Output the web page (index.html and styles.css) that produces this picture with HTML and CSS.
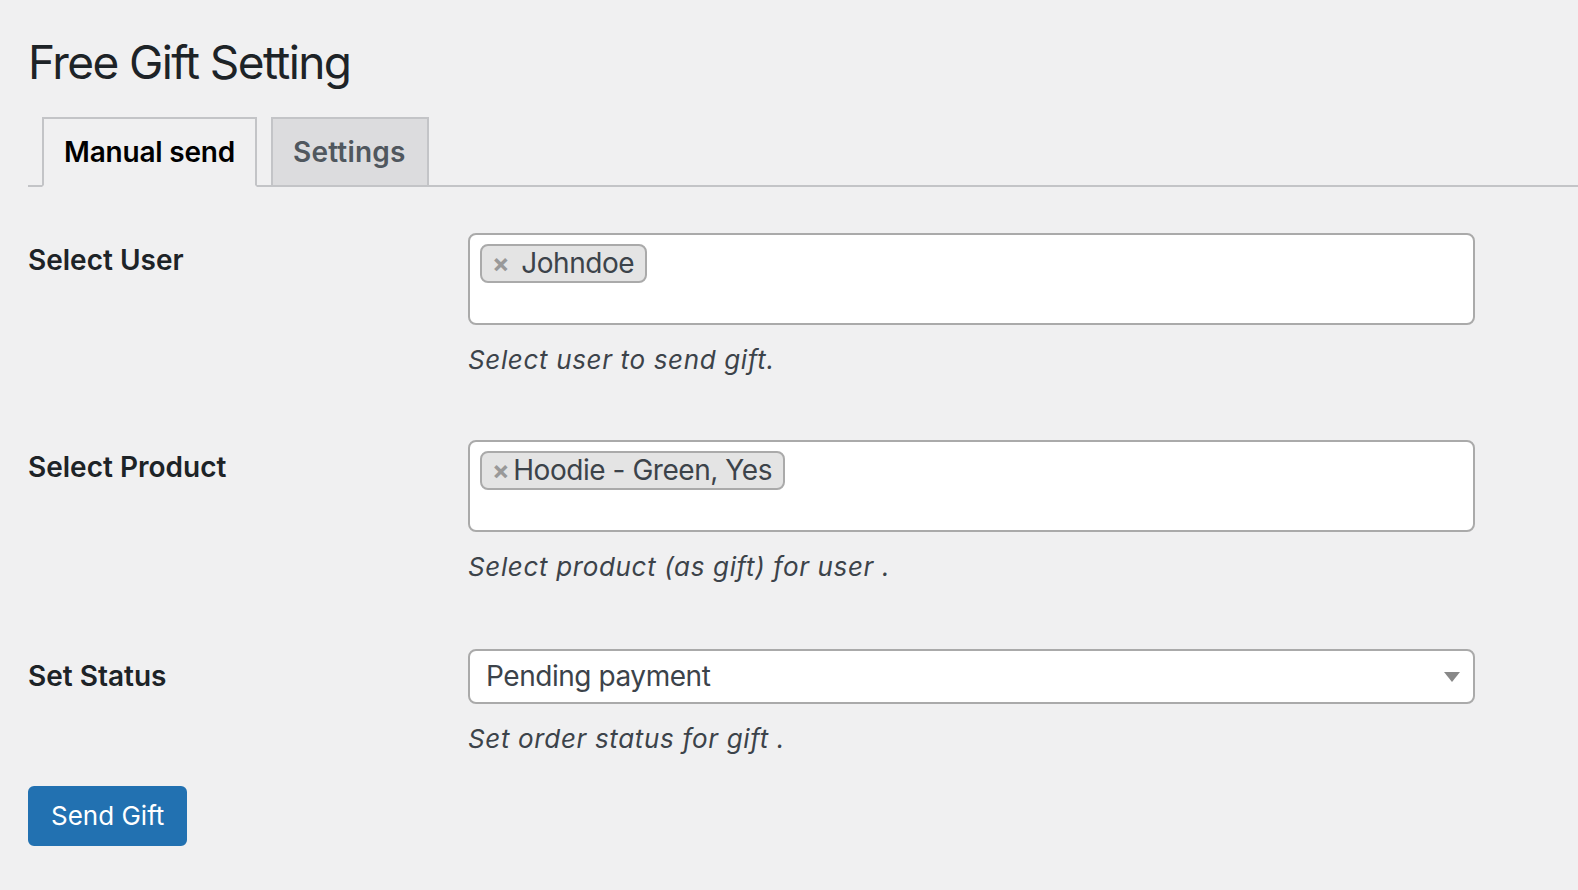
FILE: index.html
```html
<!doctype html>
<html>
    <head>
        <link rel="stylesheet" href="styles.css">
    </head>
    <body>
        <div class="wrap">
            <h1>Free Gift Setting</h1>
            <nav class="tabs">
                <a class="tab tab-active">Manual send</a>
                <a class="tab">Settings</a>
            </nav>
            <form class="gift-form">
                <div class="row">
                    <label class="row-label">Select User</label>
                    <div class="row-field">
                        <div class="multi">
                            <span class="chip"><span class="chip-x chip-x-wide">×</span>Johndoe</span>
                        </div>
                        <p class="description">Select user to send gift.</p>
                    </div>
                </div>
                <div class="row row-product">
                    <label class="row-label">Select Product</label>
                    <div class="row-field">
                        <div class="multi">
                            <span class="chip"><span class="chip-x">×</span>Hoodie - Green, Yes</span>
                        </div>
                        <p class="description">Select product (as gift) for user .</p>
                    </div>
                </div>
                <div class="row row-last">
                    <label class="row-label">Set Status</label>
                    <div class="row-field">
                        <div class="single">
                            <span>Pending payment</span>
                            <span class="arrow"></span>
                        </div>
                        <p class="description description-status">Set order status for gift .</p>
                    </div>
                </div>
                <button type="button" class="button-primary">Send Gift</button>
            </form>
        </div>
    </body>
</html>
```

FILE: styles.css
```css
* {
    margin: 0;
    padding: 0;
    box-sizing: border-box;
}
body {
    background: #f0f0f1;
    color: #1d2327;
    font-family: Inter, "Noto Sans", sans-serif;
}
.wrap {
    padding-left: 28px;
}
h1 {
    font-size: 46px;
    font-weight: 400;
    line-height: 60px;
    margin-top: 32px;
    letter-spacing: -1.6px;
}
.tabs {
    display: flex;
    margin-top: 25px;
    border-bottom: 2px solid #c3c4c7;
}
.tab {
    margin-left: 14px;
    margin-bottom: -2px;
    padding: 10px 21px 10px 20px;
    border: 2px solid #c3c4c7;
    background: #dcdcde;
    color: #50575e;
    font-size: 28px;
    font-weight: 600;
    line-height: 46px;
    letter-spacing: 0.2px;
}
.tab-active {
    padding-right: 20px;
    background: #f0f0f1;
    border-bottom-color: #f0f0f1;
    color: #000;
    letter-spacing: -0.2px;
}
.gift-form {
    padding-top: 14px;
}
.row {
    display: flex;
    padding-bottom: 29px;
}
.row-product {
    padding-bottom: 31px;
}
.row-label {
    flex: none;
    width: 440px;
    padding-top: 41px;
    font-size: 28px;
    font-weight: 600;
    line-height: 36px;
}
.row-field {
    padding-top: 32px;
}
.multi {
    width: 1007px;
    height: 92px;
    background: white;
    border: 2px solid #aaa;
    border-radius: 8px;
    padding: 9px 10px;
}
.chip {
    display: inline-flex;
    align-items: center;
    height: 39px;
    padding: 0 11px 0 10px;
    background: #e4e4e4;
    border: 2px solid #aaa;
    border-radius: 8px;
    color: #3c434a;
    font-size: 28px;
    line-height: 35px;
    letter-spacing: -0.45px;
}
.chip-x {
    color: #999;
    font-weight: 700;
    font-size: 26px;
    margin-right: 4px;
}
.chip-x-wide {
    margin-right: 12px;
}
.description {
    margin-top: 15px;
    color: #3c434a;
    font-size: 26px;
    font-style: italic;
    line-height: 39px;
    letter-spacing: 0.65px;
}
.description-status {
    margin-top: 15px;
}
.single {
    display: flex;
    align-items: center;
    justify-content: space-between;
    width: 1007px;
    height: 55px;
    padding: 0 13px 0 16px;
    background: white;
    border: 2px solid #aaa;
    border-radius: 8px;
    color: #3c434a;
    font-size: 28px;
    line-height: 51px;
    letter-spacing: -0.45px;
}
.arrow {
    width: 0;
    height: 0;
    border-left: 8px solid transparent;
    border-right: 8px solid transparent;
    border-top: 10px solid #888;
}
.row-last {
    padding-bottom: 28px;
}
.button-primary {
    height: 60px;
    padding: 0 21px;
    background: #2271b1;
    border: 2px solid #2271b1;
    border-radius: 6px;
    color: white;
    font-family: Inter, "Noto Sans", sans-serif;
    font-size: 26px;
    line-height: 56px;
}
```
